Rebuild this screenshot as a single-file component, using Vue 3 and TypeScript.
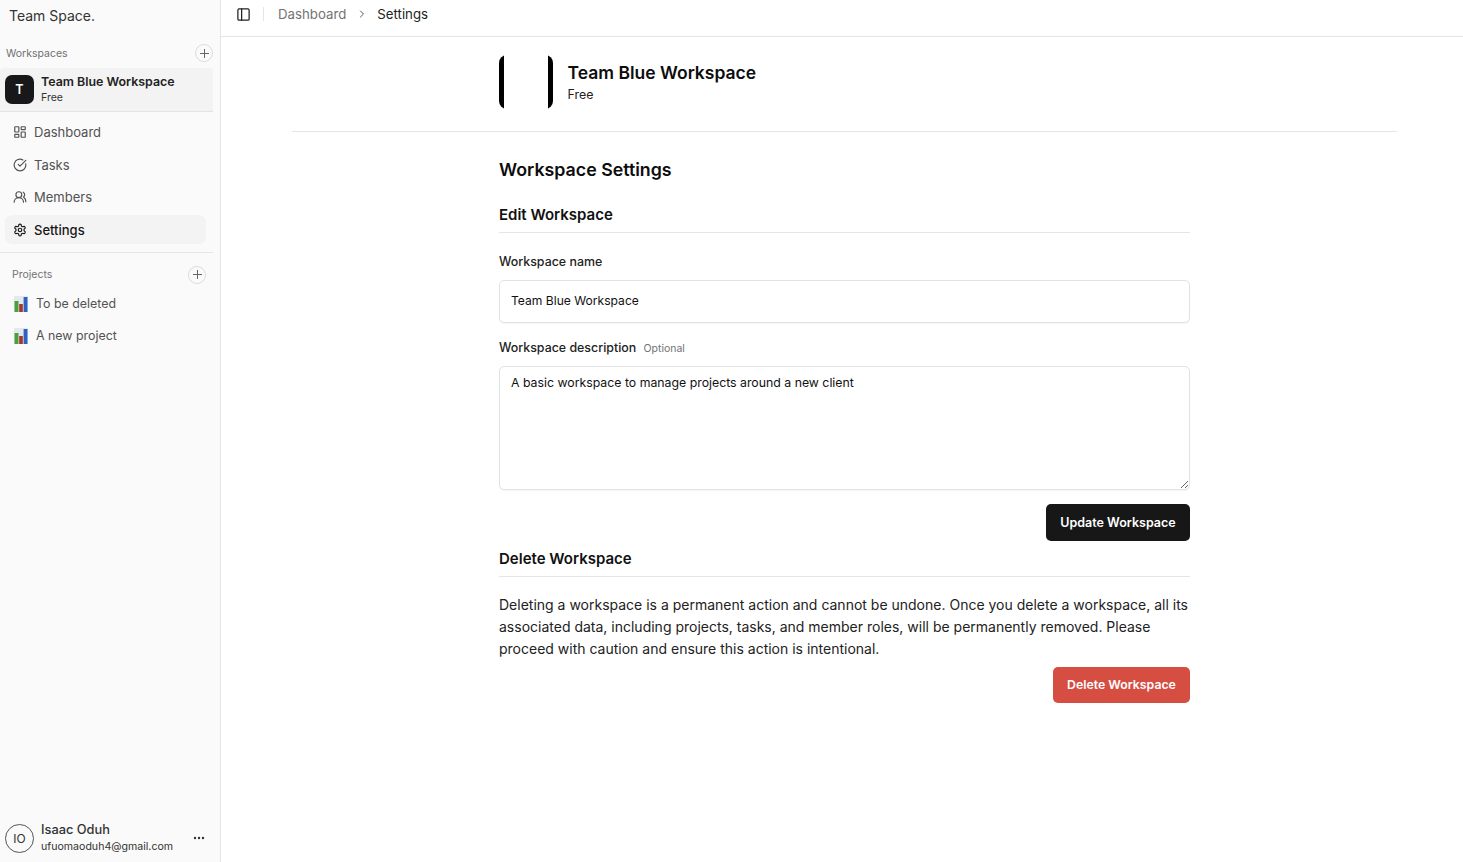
<script setup lang="ts">
const navItems = [
  { label: 'Dashboard', icon: 'dash', active: false },
  { label: 'Tasks', icon: 'tasks', active: false },
  { label: 'Members', icon: 'members', active: false },
  { label: 'Settings', icon: 'settings', active: true },
]
const projects = ['To be deleted', 'A new project']
</script>

<template>
  <div class="app">
    <aside class="sidebar">
      <div class="brand">Team Space.</div>
      <div class="section-head ws-head">
        <span>Workspaces</span>
        <button class="plus"><svg width="11" height="11" viewBox="0 0 11 11"><path d="M5.5 1v9M1 5.5h9" stroke="#666" stroke-width="1" fill="none"/></svg></button>
      </div>
      <div class="ws-card">
        <div class="ws-avatar">T</div>
        <div class="ws-text">
          <div class="ws-name">Team Blue Workspace</div>
          <div class="ws-plan">Free</div>
        </div>
      </div>
      <nav class="nav">
        <a v-for="item in navItems" :key="item.label" class="nav-item" :class="{ active: item.active }">
          <svg class="nav-icon" viewBox="0 0 24 24" fill="none" stroke="currentColor" stroke-width="2" stroke-linecap="round" stroke-linejoin="round">
            <template v-if="item.icon === 'dash'">
              <rect x="3" y="3" width="7" height="9" rx="1" /><rect x="14" y="3" width="7" height="5" rx="1" /><rect x="14" y="12" width="7" height="9" rx="1" /><rect x="3" y="16" width="7" height="5" rx="1" />
            </template>
            <template v-else-if="item.icon === 'tasks'">
              <path d="M21.8 10A10 10 0 1 1 17 3.3" /><path d="m9 11 3 3L22 4" />
            </template>
            <template v-else-if="item.icon === 'members'">
              <path d="M18 21a8 8 0 0 0-16 0" /><circle cx="10" cy="8" r="5" /><path d="M22 20c0-3.4-2-6.5-4-8a5 5 0 0 0-.45-8.3" />
            </template>
            <template v-else>
              <path d="M12.2 2h-.4a2 2 0 0 0-2 2v.2a2 2 0 0 1-1 1.7l-.4.3a2 2 0 0 1-2 0l-.2-.1a2 2 0 0 0-2.7.7l-.2.4a2 2 0 0 0 .7 2.7l.2.1a2 2 0 0 1 1 1.7v.5a2 2 0 0 1-1 1.8l-.2.1a2 2 0 0 0-.7 2.7l.2.4a2 2 0 0 0 2.7.7l.2-.1a2 2 0 0 1 2 0l.4.3a2 2 0 0 1 1 1.7v.2a2 2 0 0 0 2 2h.4a2 2 0 0 0 2-2v-.2a2 2 0 0 1 1-1.7l.4-.3a2 2 0 0 1 2 0l.2.1a2 2 0 0 0 2.7-.7l.2-.4a2 2 0 0 0-.7-2.7l-.2-.1a2 2 0 0 1-1-1.8v-.5a2 2 0 0 1 1-1.7l.2-.1a2 2 0 0 0 .7-2.7l-.2-.4a2 2 0 0 0-2.7-.7l-.2.1a2 2 0 0 1-2 0l-.4-.3a2 2 0 0 1-1-1.7V4a2 2 0 0 0-2-2z" /><circle cx="12" cy="12" r="3" />
            </template>
          </svg>
          <span>{{ item.label }}</span>
        </a>
      </nav>
      <div class="side-rule"></div>
      <div class="section-head proj-head">
        <span>Projects</span>
        <button class="plus"><svg width="11" height="11" viewBox="0 0 11 11"><path d="M5.5 1v9M1 5.5h9" stroke="#666" stroke-width="1" fill="none"/></svg></button>
      </div>
      <div class="projects">
        <a v-for="p in projects" :key="p" class="project">
          <svg class="chart" viewBox="0 0 14 16">
            <rect width="14" height="16" fill="#e6e9ec" />
            <rect x="0.5" y="5" width="4" height="11" fill="#4aa03f" />
            <rect x="5.2" y="8" width="3.6" height="8" fill="#a8352a" />
            <rect x="9.6" y="1" width="3.9" height="15" fill="#2b62c4" />
          </svg>
          <span>{{ p }}</span>
        </a>
      </div>
      <div class="user">
        <div class="user-avatar">IO</div>
        <div class="user-text">
          <div class="user-name">Isaac Oduh</div>
          <div class="user-mail">ufuomaoduh4@gmail.com</div>
        </div>
        <svg class="dots" width="12" height="4" viewBox="0 0 12 4"><circle cx="2" cy="2" r="1.2" fill="#333"/><circle cx="6" cy="2" r="1.2" fill="#333"/><circle cx="10" cy="2" r="1.2" fill="#333"/></svg>
      </div>
    </aside>

    <div class="main">
      <header class="topbar">
        <svg class="panel-icon" viewBox="0 0 24 24" fill="none" stroke="#222" stroke-width="2" stroke-linecap="round" stroke-linejoin="round"><rect x="3" y="3" width="18" height="18" rx="2" /><path d="M9 3v18" /></svg>
        <div class="bar-sep"></div>
        <span class="crumb">Dashboard</span>
        <svg class="chev" viewBox="0 0 24 24" fill="none" stroke="#555" stroke-width="2" stroke-linecap="round" stroke-linejoin="round"><path d="m9 18 6-6-6-6" /></svg>
        <span class="crumb current">Settings</span>
      </header>

      <div class="page">
        <div class="ws-banner">
          <div class="banner-inner">
            <div class="big-logo"></div>
            <div class="big-text">
              <div class="big-name">Team Blue Workspace</div>
              <div class="big-plan">Free</div>
            </div>
          </div>
        </div>

        <div class="content">
          <h1 class="title">Workspace Settings</h1>
          <h2 class="sub first">Edit Workspace</h2>
          <label class="label name-label">Workspace name</label>
          <input class="field" value="Team Blue Workspace" />
          <label class="label desc-label">Workspace description <span class="optional">Optional</span></label>
          <textarea class="field area">A basic workspace to manage projects around a new client</textarea>
          <div class="actions"><button class="btn dark">Update Workspace</button></div>
          <h2 class="sub second">Delete Workspace</h2>
          <p class="warning">Deleting a workspace is a permanent action and cannot be undone. Once you delete a workspace, all its associated data, including projects, tasks, and member roles, will be permanently removed. Please proceed with caution and ensure this action is intentional.</p>
          <div class="actions del"><button class="btn red">Delete Workspace</button></div>
        </div>
      </div>
    </div>
  </div>
</template>

<style>
html, body { margin: 0; background: #fff; }
</style>

<style scoped>
* { box-sizing: border-box; }
.app {
  display: flex;
  height: 862px;
  overflow: hidden;
  font-family: Inter, "Liberation Sans", sans-serif;
  color: #0d0d0d;
}
.sidebar {
  width: 221px;
  flex: none;
  display: flex;
  flex-direction: column;
  background: #fafafa;
  border-right: 1px solid #e5e5e5;
}
.brand { font-size: 14px; line-height: 20px; padding: 6px 0 0 9px; color: #333; }
.section-head {
  display: flex;
  align-items: center;
  justify-content: space-between;
  font-size: 10.5px;
  color: #707070;
}
.ws-head { padding: 0 7px 0 6px; margin-top: 17px; height: 20px; }
.plus {
  width: 18px;
  height: 18px;
  padding: 0;
  display: flex;
  align-items: center;
  justify-content: center;
  background: transparent;
  border: 1px solid #dcdcdc;
  border-radius: 50%;
}
.ws-card {
  width: 213px;
  height: 44px;
  margin-top: 5px;
  display: flex;
  align-items: center;
  gap: 7px;
  padding: 0 5px;
  background: #f3f3f3;
  border-bottom: 1px solid #e3e3e3;
  border-radius: 4px 4px 0 0;
}
.ws-avatar {
  width: 29px;
  height: 29px;
  display: flex;
  align-items: center;
  justify-content: center;
  border-radius: 7px;
  background: #18181b;
  color: #fff;
  font-size: 12.5px;
  font-weight: 600;
}
.ws-name { font-size: 12.4px; line-height: 15px; font-weight: 600; color: #222; }
.ws-plan { font-size: 10.5px; line-height: 17px; color: #333; }
.nav { display: flex; flex-direction: column; padding: 5.4px 14px 0 5px; gap: 3.67px; }
.nav-item {
  height: 29px;
  display: flex;
  align-items: center;
  gap: 7px;
  padding-left: 8px;
  font-size: 13px;
  color: #525252;
  border-radius: 7px;
}
.nav-item.active { background: #f3f3f3; color: #171717; font-weight: 500; }
.nav-icon { width: 14px; height: 14px; flex: none; }
.side-rule { height: 1px; background: #e5e5e5; margin: 7.6px 7px 0 0; }
.proj-head { padding: 0 14px 0 12px; margin-top: 13px; height: 18px; color: #737373; }
.projects { display: flex; flex-direction: column; gap: 4px; padding: 6px 0 0 14px; }
.project {
  height: 28px;
  display: flex;
  align-items: center;
  gap: 8px;
  font-size: 12.4px;
  color: #525252;
}
.chart { width: 14px; height: 16px; flex: none; }
.user {
  margin-top: auto;
  height: 48px;
  display: flex;
  align-items: center;
  padding: 0 15px 0 5px;
}
.user-avatar {
  width: 29px;
  height: 29px;
  flex: none;
  display: flex;
  align-items: center;
  justify-content: center;
  border: 1px solid #555;
  border-radius: 50%;
  font-size: 12px;
  color: #333;
}
.user-text { margin-left: 7px; flex: 1; }
.user-name { font-size: 12.8px; line-height: 16px; font-weight: 500; color: #333; }
.user-mail { font-size: 10.6px; line-height: 17px; color: #333; }
.main { flex: 1; min-width: 0; display: flex; flex-direction: column; }
.topbar {
  height: 37px;
  flex: none;
  display: flex;
  align-items: center;
  padding: 0 0 8px 15px;
  border-bottom: 1px solid #e5e5e5;
}
.panel-icon { width: 15px; height: 15px; flex: none; }
.bar-sep { width: 1px; height: 14px; background: #e5e5e5; margin: 0 14px 0 12px; }
.crumb { font-size: 13.25px; color: #737373; }
.crumb.current { color: #222; }
.chev { width: 12px; height: 12px; margin: 0 9px 0 10px; }
.page { flex: 1; display: flex; flex-direction: column; align-items: stretch; }
.ws-banner { margin: 0 66px 0 71px; height: 95px; border-bottom: 1px solid #e5e5e5; padding-top: 18px; }
.banner-inner { margin-left: 207px; display: flex; align-items: center; gap: 14.5px; }
.big-logo {
  width: 54px;
  height: 54px;
  border-radius: 8px;
  background: linear-gradient(90deg, #000 0 5px, #fff 5px 49px, #000 49px);
}
.big-text { padding-top: 1px; }
.big-name { font-size: 17.5px; line-height: 24px; font-weight: 600; color: #0d0d0d; }
.big-plan { font-size: 12.4px; line-height: 20px; color: #222; }
.content { width: 691px; margin-left: 278px; }
.title { margin: 26px 0 0; font-size: 17.8px; line-height: 24px; font-weight: 600; }
.sub {
  margin: 0;
  font-size: 15px;
  line-height: 20px;
  font-weight: 600;
  padding-bottom: 7px;
  border-bottom: 1px solid #e5e5e5;
  color: #111;
}
.sub.first { margin-top: 23px; }
.sub.second { margin-top: 8px; }
.label { display: block; font-size: 12.4px; line-height: 18px; font-weight: 500; color: #222; }
.name-label { margin-top: 20px; }
.desc-label { margin-top: 16px; }
.optional { font-size: 10.5px; font-weight: 400; color: #737373; margin-left: 4px; }
.field {
  display: block;
  width: 100%;
  margin-top: 9px;
  height: 43px;
  padding: 0 11px 2px;
  font: inherit;
  font-size: 12.1px;
  color: #111;
  background: #fff;
  border: 1px solid #e2e2e2;
  border-radius: 5px;
  box-shadow: 0 1px 1px rgba(0, 0, 0, 0.04);
  outline: none;
}
.area { height: 124px; margin-top: 8px; padding: 7px 11px; font-size: 12.3px; line-height: 18px; resize: vertical; }
.actions { display: flex; justify-content: flex-end; margin-top: 14px; }
.btn {
  height: 37px;
  border: none;
  border-radius: 5px;
  color: #fff;
  font: inherit;
  font-size: 12.5px;
  font-weight: 600;
  padding: 0;
}
.btn.dark { background: #171717; width: 144px; }
.btn.red { background: #d64d42; height: 36px; width: 137px; padding-bottom: 2px; font-size: 12.3px; }
.warning { margin: 17px 0 0; font-size: 14px; line-height: 22px; color: #222; }
.actions.del { margin-top: 7px; }
</style>
